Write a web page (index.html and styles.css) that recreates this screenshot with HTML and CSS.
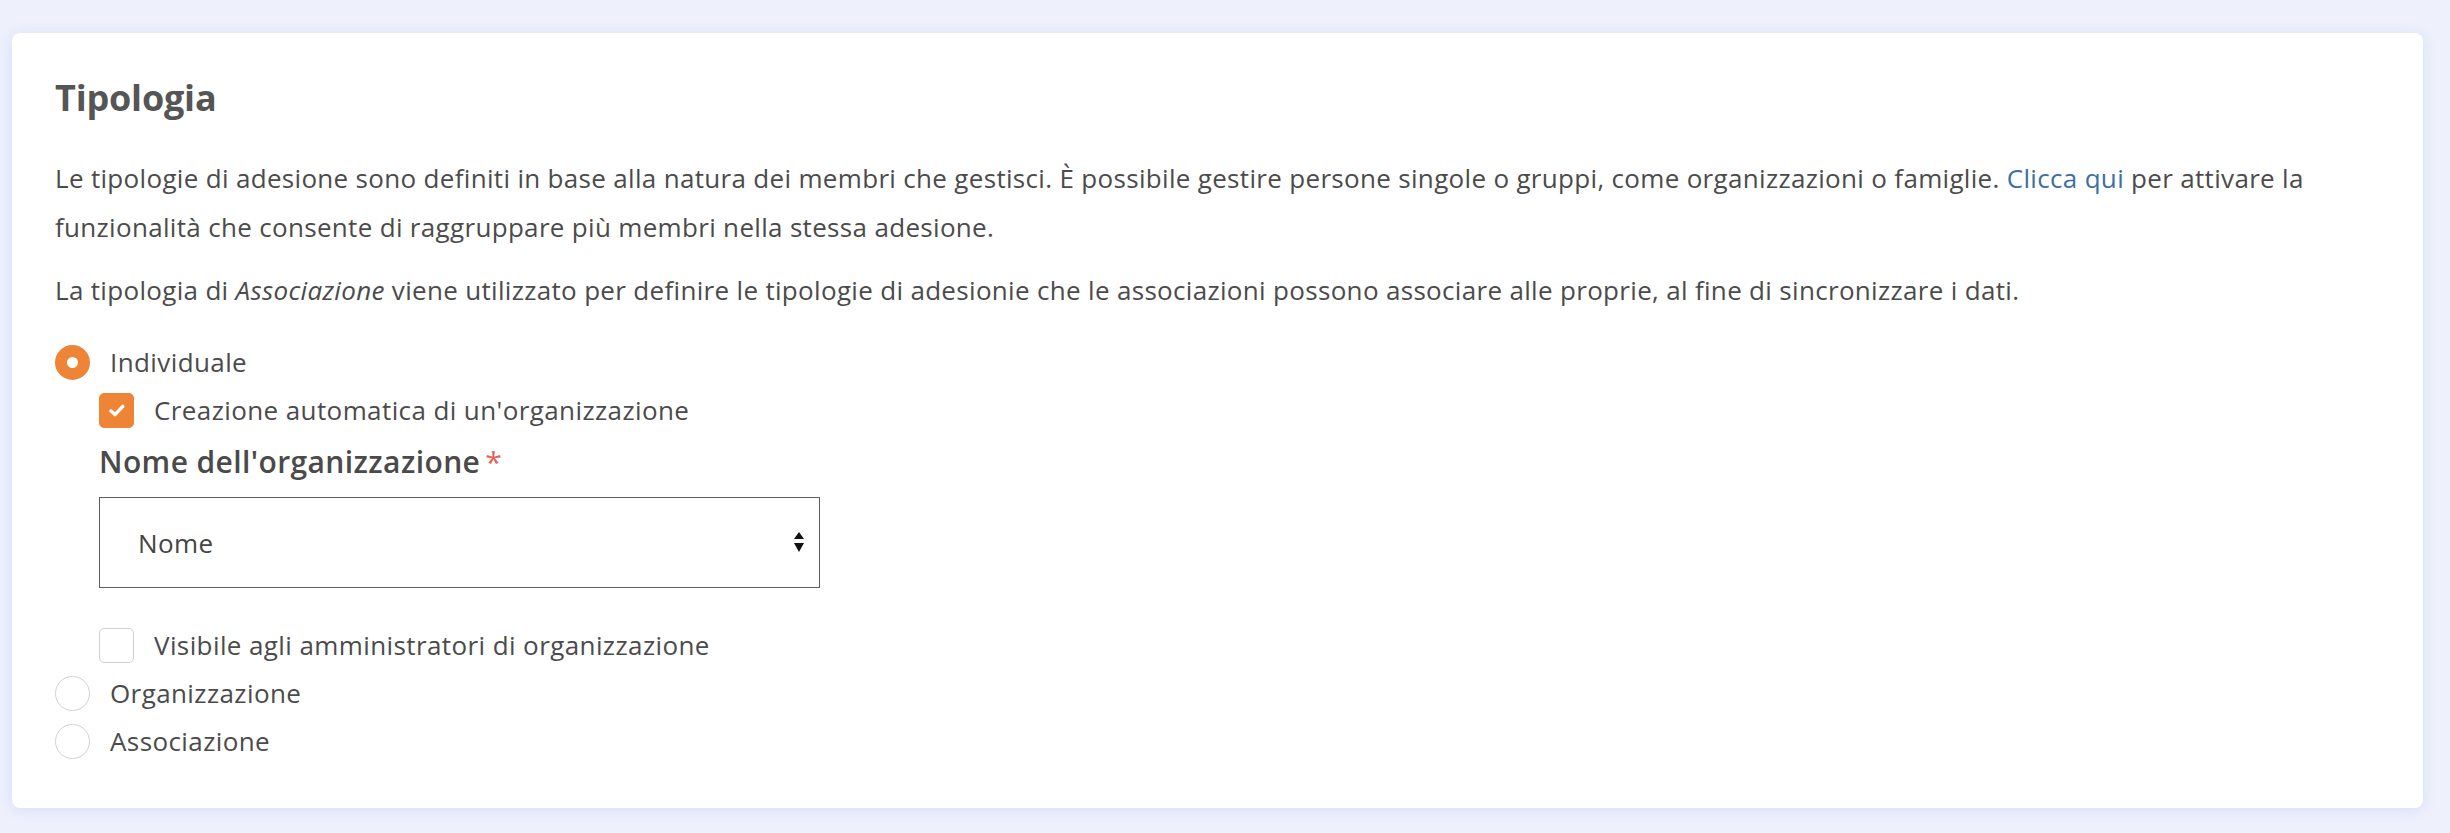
FILE: index.html
```html
<!DOCTYPE html>
<html>
	<head>
		<meta charset="utf-8">
		<title>Tipologia</title>
		<link rel="stylesheet" href="styles.css">
	</head>
	<body>

		<div class="card">
			<h3 class="card-title">Tipologia</h3>

			<p class="card-text">Le tipologie di adesione sono definiti in base alla natura dei membri che gestisci. È possibile gestire persone singole o gruppi, come organizzazioni o famiglie. <a href="#">Clicca qui</a> per attivare la funzionalità che consente di raggruppare più membri nella stessa adesione.</p>
			<p class="card-text card-text-last">La tipologia di <em>Associazione</em> viene utilizzato per definire le tipologie di adesionie che le associazioni possono associare alle proprie, al fine di sincronizzare i dati.</p>

			<div class="opt">
				<span class="radio radio-on"></span>
				<span>Individuale</span>
			</div>

			<div class="sub">
				<div class="opt">
					<span class="check check-on">
						<svg width="16" height="13" viewBox="0 0 16 13"><path d="M2 7 L6 10.6 L13.8 2.4" fill="none" stroke="#fff" stroke-width="3.4" stroke-linecap="round" stroke-linejoin="round"/></svg>
					</span>
					<span>Creazione automatica di un'organizzazione</span>
				</div>

				<label class="field-label">Nome dell'organizzazione<span class="req">*</span></label>
				<div class="select">
					<span>Nome</span>
					<svg class="select-arrows" width="10" height="21" viewBox="0 0 10 21"><path d="M5 0 L10 7 L0 7 Z M0 11 L10 11 L5 20 Z" fill="#111"/></svg>
				</div>

				<div class="opt opt-visible">
					<span class="check"></span>
					<span>Visibile agli amministratori di organizzazione</span>
				</div>
			</div>

			<div class="opt">
				<span class="radio"></span>
				<span>Organizzazione</span>
			</div>
			<div class="opt">
				<span class="radio"></span>
				<span>Associazione</span>
			</div>
		</div>

	</body>
</html>
```

FILE: styles.css
```css
body{
	margin: 0;
	background-color: #eef1fc;
	font-family: "Open Sans", "Noto Sans", sans-serif;
	color: #4b4b4b;
}

.card{
	margin: 33px 27px 24px 12px;
	padding: 42px 43px 43px 43px;
	background-color: #fff;
	border-radius: 8px;
	box-shadow: 0 2px 14px rgba(170, 185, 230, 0.35);
}

.card-title{
	margin: 0 0 34px 0;
	font-size: 36px;
	line-height: 45px;
	font-weight: 700;
	letter-spacing: -0.2px;
	color: #555;
}

.card-text{
	margin: 0 0 14px 0;
	font-size: 26px;
	line-height: 49px;
	letter-spacing: 0.32px;
}

.card-text a{
	color: #3d6fa6;
	text-decoration: none;
}

.card-text-last{
	margin-bottom: 23px;
}

/* riga con radio o checkbox */
.opt{
	display: flex;
	align-items: center;
	gap: 20px;
	height: 48px;
	font-size: 26px;
	letter-spacing: 0.4px;
}

.radio{
	display: inline-block;
	box-sizing: border-box;
	width: 35px;
	height: 35px;
	border-radius: 50%;
	border: 1px solid #cfd1d6;
	background-color: #fff;
}

.radio-on{
	border: 12px solid #ee8536;
}

.sub{
	padding-left: 44px;
}

.check{
	display: inline-flex;
	align-items: center;
	justify-content: center;
	box-sizing: border-box;
	width: 35px;
	height: 35px;
	border-radius: 5px;
	border: 1px solid #cfd1d6;
	background-color: #fff;
}

.check-on{
	border-color: #ee8536;
	background-color: #ee8536;
}

.field-label{
	display: block;
	margin-top: 8px;
	font-size: 30px;
	line-height: 40px;
	font-weight: 600;
	letter-spacing: 0.4px;
	color: #4a4a4a;
}

.req{
	color: #e3625a;
	font-weight: 400;
	margin-left: 5px;
}

.select{
	display: flex;
	align-items: center;
	justify-content: space-between;
	box-sizing: border-box;
	width: 721px;
	height: 91px;
	margin-top: 15px;
	padding: 0 15px 0 38px;
	border: 1px solid #5e5e5e;
	font-size: 26px;
	letter-spacing: 0.4px;
	color: #454545;
}

.opt-visible{
	margin-top: 33px;
}
```
